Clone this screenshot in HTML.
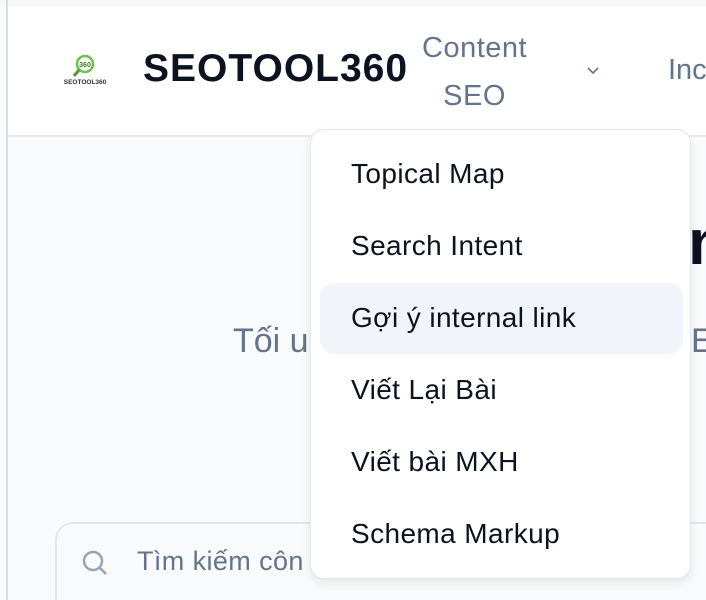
<!DOCTYPE html>
<html><head><meta charset="utf-8"><style>
*{margin:0;padding:0;box-sizing:border-box}
html,body{width:706px;height:600px;overflow:hidden}
body{background:#f8fafc;font-family:"Liberation Sans","Noto Sans CJK SC",sans-serif;position:relative}
.top{position:absolute;left:0;top:0;width:706px;height:7px;background:#f6f7f9}
.lb{position:absolute;left:6px;top:0;width:2px;height:600px;background:#d9dce1}
.hdr{position:absolute;left:8px;top:7px;width:698px;height:130px;background:#fff;border-bottom:2px solid #e5e8ee}
.brand{position:absolute;left:143px;top:47px;font-size:39px;font-weight:bold;color:#0b1220;letter-spacing:1px}
.nav{position:absolute;left:422px;top:24px;font-size:29px;color:#64748b;text-align:center;line-height:48px;letter-spacing:0.5px}
.inc{position:absolute;left:668px;top:54px;font-size:29px;color:#64748b}
.big{position:absolute;left:688px;top:205px;font-size:64px;font-weight:bold;color:#0b1220}
.sub{position:absolute;left:233px;top:322px;font-size:34px;color:#64748b}
.sub2{position:absolute;left:691px;top:322px;font-size:34px;color:#64748b}
.search{position:absolute;left:55px;top:522px;width:700px;height:100px;border:2px solid #e2e6ec;border-radius:18px;background:#f8fafc}
.stext{position:absolute;left:137px;top:546px;font-size:27px;color:#64748b;letter-spacing:0.4px}
.dd{position:absolute;left:310px;top:129px;width:381px;height:450px;background:#fff;border:1px solid #e2e6ec;border-radius:14px;box-shadow:0 4px 10px rgba(0,0,0,.08)}
.it{position:absolute;left:40px;font-size:28px;color:#0b1220;letter-spacing:0.4px}
.hl{position:absolute;left:9px;top:153px;width:363px;height:71px;background:#f1f4f8;border-radius:14px}
</style></head><body>
<div class="top"></div>
<div class="hdr"></div>
<div class="lb"></div>
<svg style="position:absolute;left:64px;top:52px" width="42" height="42" viewBox="0 0 42 42">
<circle cx="21" cy="12" r="8" fill="none" stroke="#6cc04a" stroke-width="2.5"/>
<text x="21" y="15" font-size="7" font-weight="bold" text-anchor="middle" fill="#3a7a2a" font-family="Liberation Sans">360</text>
<line x1="15" y1="18" x2="10" y2="24" stroke="#4f9a35" stroke-width="3"/>
<text x="21" y="32" font-size="6.5" font-weight="bold" text-anchor="middle" fill="#333" font-family="Liberation Sans">SEOTOOL360</text>
</svg>
<div class="brand">SEOTOOL360</div>
<div class="nav">Content<br>SEO</div>
<svg style="position:absolute;left:586px;top:66px" width="14" height="10" viewBox="0 0 14 10"><path d="M2 2l5 5 5-5" fill="none" stroke="#64748b" stroke-width="1.6"/></svg>
<div class="inc">Inc</div>
<div class="big">n</div>
<div class="sub">Tối u</div>
<div class="sub2">E</div>
<div class="search"></div>
<svg style="position:absolute;left:80px;top:548px" width="30" height="30" viewBox="0 0 30 30"><circle cx="13" cy="13" r="9" fill="none" stroke="#94a3b8" stroke-width="2.4"/><line x1="20" y1="20" x2="26" y2="26" stroke="#94a3b8" stroke-width="2.4"/></svg>
<div class="stext">Tìm kiếm côn</div>
<div class="dd">
<div class="hl"></div>
<div class="it" style="top:28px">Topical Map</div>
<div class="it" style="top:100px">Search Intent</div>
<div class="it" style="top:172px">Gợi ý internal link</div>
<div class="it" style="top:244px">Viết Lại Bài</div>
<div class="it" style="top:316px">Viết bài MXH</div>
<div class="it" style="top:388px">Schema Markup</div>
</div>
</body></html>
